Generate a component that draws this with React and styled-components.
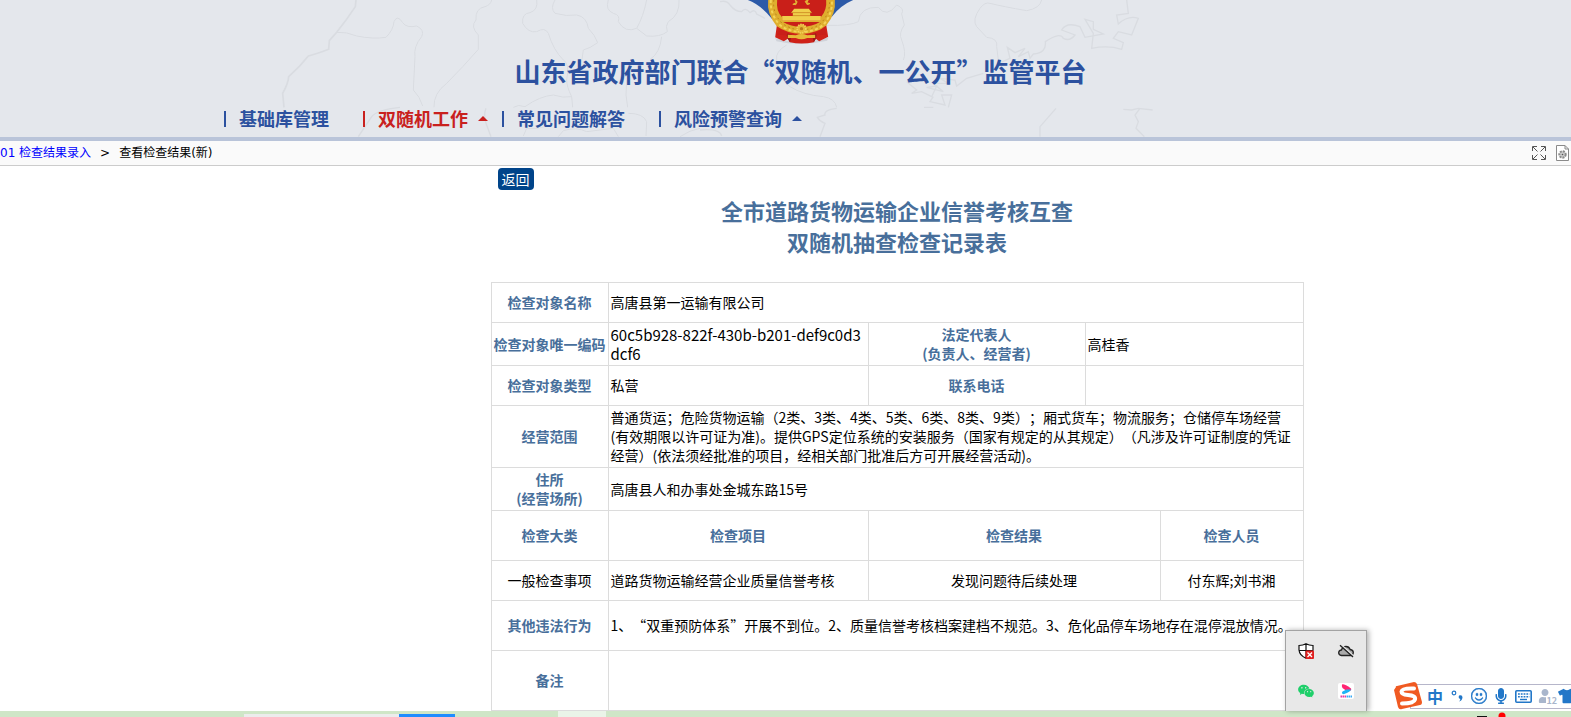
import React from "react";
import styled, { createGlobalStyle } from "styled-components";
import { FaMicrophone, FaTshirt, FaUser } from "react-icons/fa";
import { BsEmojiSmile } from "react-icons/bs";
import { AiFillWechat } from "react-icons/ai";

const GlobalStyle = createGlobalStyle`
  * {
    box-sizing: border-box;
  }
  body {
    margin: 0;
    background: #fff;
    color: #000;
    font-family: "Noto Sans CJK SC", sans-serif;
    font-size: 14px;
    line-height: 19px;
    text-spacing-trim: space-all;
    overflow-x: hidden;
  }
`;

const menus = [
  { name: "基础库管理" },
  { name: "双随机工作", active: true, more: true },
  { name: "常见问题解答" },
  { name: "风险预警查询", more: true },
];

const MapLines = () => (
  <MapSvg viewBox="0 0 1571 137" aria-hidden="true">
    <g transform="translate(200 0) scale(.33333)">
      <path strokeWidth="5" d="M468 0L466 20Q440 60 410 97L388 122L386 148Q350 162 325 168Q300 200 266 230Q265 250 248 280L252 322" />
      <path d="M410 97Q440 95 470 108Q520 118 558 112Q580 90 582 65Q592 42 608 68Q620 85 650 78Q675 90 665 110Q640 140 645 170L640 270Q660 290 668 318" />
      <path d="M875 0Q872 15 855 20Q825 25 828 60Q810 80 835 105L835 148Q790 200 740 250Q700 280 702 322" />
      <path d="M1010 0Q1015 30 990 38Q965 40 968 70Q985 100 1010 95Q1035 80 1045 100Q1060 150 1090 180Q1110 190 1100 240Q1100 260 1115 290L1118 322" />
      <path d="M1065 0Q1050 25 1065 40Q1100 50 1130 45Q1160 50 1165 85Q1185 105 1193 128Q1170 145 1150 150L1145 185" />
      <path d="M1225 0Q1215 30 1240 40Q1262 45 1255 65Q1275 100 1310 85Q1330 50 1340 0" />
      <path d="M1437 0Q1440 45 1405 65Q1395 78 1402 95Q1380 112 1340 108L1310 85M1385 110Q1380 160 1350 178M1280 240L1278 285L1283 322" />
      <path d="M940 322Q955 312 975 320Q1020 288 1060 285Q1090 295 1115 290" />
      <path strokeWidth="4" d="M475 410Q495 380 515 350Q530 330 600 322M858 325Q850 345 858 370L873 410" />
      <path d="M970 408L980 385Q1040 390 1060 360L1100 370M1075 410L1090 392Q1130 380 1160 395L1240 385L1255 410M1285 340Q1330 340 1340 365L1338 408M1440 410Q1470 390 1500 385" />
    </g>
    <g transform="translate(700 0) scale(.33333)">
      <path strokeWidth="4" d="M60 5Q80 0 90 15Q105 35 125 35Q135 20 150 38Q165 25 170 42L195 55" />
      <path d="M380 76Q450 78 475 65Q480 20 535 22Q560 55 590 15Q615 25 605 42L613 75Q595 100 605 120Q620 160 610 180" />
      <path d="M260 135Q225 155 230 180Q230 230 270 260Q310 285 370 290Q405 295 410 322" />
      <path d="M1025 0Q1020 25 980 32Q910 20 870 10Q855 5 840 25Q815 60 830 80L860 112Q895 115 890 140L895 180" />
      <path strokeWidth="4" d="M895 190L930 175L922 142L945 158L975 145L955 170L985 155L990 175L1000 162Q1040 160 1036 125Q1080 95 1090 115Q1110 125 1125 105L1085 90Q1100 65 1140 80L1155 112L1210 102L1180 88L1180 65L1155 58L1180 100L1175 145Q1225 135 1265 148L1270 128L1240 115L1255 95L1295 105L1315 55Q1285 45 1255 72L1250 45L1285 40L1280 0" />
      <path strokeWidth="4" d="M620 245L650 270L635 280L665 275L695 290L710 258L680 262L730 275L700 250L745 250L720 235L765 240L770 258L800 235L850 220M700 290L690 305L735 315L725 285L755 285L745 322M672 322L700 322M50 200L70 180" />
      <path strokeWidth="4" d="M410 325Q370 330 375 345L352 352Q360 365 375 370L360 410M1068 325L1020 380V410M1270 328L1295 330L1315 325L1358 330M1320 325L1305 345L1315 365L1308 385L1333 410M0 390Q60 385 65 408" />
    </g>
  </MapSvg>
);

const Emblem = () => (
  <EmblemSvg viewBox="140 0 320 138" aria-label="国徽">
    <path fill="#2c5aa8" d="M142 0Q180 14 214 56L394 50Q420 16 458 0Z" />
    <path fill="#d0d3da" d="M224 114Q300 138 384 112L380 122Q300 140 228 124Z" />
    <path fill="#cf2219" d="M230 70L224 112L250 124L262 116L268 127Q303 134 340 127L346 116L356 124L383 110L376 68Z" />
    <path fill="#9d1814" d="M256 98L262 116L268 127L274 104ZM350 98L346 116L340 127L334 104Z" />
    <path fill="#dfae2e" d="M203 0Q198 40 228 78Q258 100 303 102Q351 100 378 76Q407 40 403 0Z" />
    <path fill="none" stroke="#f3d458" strokeWidth="6" strokeDasharray="9 7" d="M211 0Q208 40 236 73Q262 95 303 96Q346 95 370 73Q397 40 394 0" />
    <path fill="none" stroke="#b98018" strokeWidth="3" strokeDasharray="5 9" d="M220 0Q215 38 244 69Q268 88 303 90Q340 88 362 69Q390 38 387 0" />
    <path fill="#c91f19" d="M230 0Q226 34 245 52L245 62H361V52Q380 30 377 0Z" />
    <path fill="#c91f19" d="M248 66H358Q336 80 303 81Q270 80 248 66Z" />
    <path fill="#c91f19" d="M236 86L262 98L260 106L230 104ZM372 86L346 98L348 106L378 104Z" />
    <path fill="#f0cf4b" d="M281 26H325L334 38H272ZM277 39H329V47H277ZM245 48H361V62H245Z" />
    <path fill="#e3b437" d="M284 0L287 8L277 13L286 14L290 5ZM323 0L319 8L328 11L320 14L314 4Z" stroke="#e3b437" strokeWidth="3" />
    <path fill="none" stroke="#c9951f" strokeWidth="2" d="M272 38H334M277 47H329" />
    <circle cx="303" cy="86" r="13" fill="#e6b73a" stroke="#f2d35a" strokeWidth="5" strokeDasharray="4 3" />
    <circle cx="303" cy="86" r="5" fill="#b87a1b" />
    <path fill="#e7b938" d="M262 104L286 106Q303 98 320 106L344 104V114L320 114Q303 122 286 114L262 114Z" />
  </EmblemSvg>
);

const ExpandIcon = () => (
  <svg width="14" height="14" viewBox="0 0 14 14" fill="none" stroke="#555">
    <path d="M.5 5V.5H5M9 .5h4.500V5M.5 9v4.500H5M9 13.500h4.500V9M1 1l4.500 4.500M13 1L8.500 5.500M1 13l4.500-4.500M13 13L8.500 8.500" />
  </svg>
);

const PageSetupIcon = () => (
  <svg width="13" height="16" viewBox="0 0 13 16" fill="none" stroke="#8a8a8a">
    <path fill="#fff" d="M.5.500H9l3.500 3.500v11.500H.5ZM9 .5V4h3.500" />
    <circle cx="6.500" cy="9.500" r="3.200" fill="#ccc" strokeWidth="2" strokeDasharray="2 1" />
    <circle cx="6.500" cy="9.500" r=".8" fill="#555" stroke="none" />
  </svg>
);

const ShieldIcon = () => (
  <svg width="16" height="16" viewBox="0 0 16 16">
    <path fill="#fff" stroke="#111" strokeWidth="1.200" d="M8 .8Q11 2.500 15 2.500V7Q14.500 12.500 8 15.200Q1.500 12.500 1 7V2.500Q5 2.500 8 .8ZM8 1v14M1 7.500h14" />
    <rect x="7.500" y="7.500" width="8.500" height="8.500" rx="1" fill="#e02020" />
    <path stroke="#fff" strokeWidth="1.300" d="M9.500 9.500l4.500 4.500M14 9.500L9.500 14" />
  </svg>
);

const CloudOffIcon = () => (
  <svg width="16" height="16" viewBox="0 0 16 16">
    <path fill="#aaa" stroke="#222" strokeWidth="1.300" d="M3.500 12.500Q.5 12 .7 9.500Q1 7.200 3.500 7Q4.500 3.500 8 3.500Q11 3.500 12.200 6.500Q15.300 7 15.300 9.500Q15.200 12.500 12.500 12.500Z" />
    <path stroke="#e8e8e8" strokeWidth="1.500" d="M3 1.500L15 12.500" />
    <path stroke="#222" strokeWidth="1.300" d="M2 2.300L15 14" />
  </svg>
);

const VideoIcon = () => (
  <svg width="16" height="16" viewBox="0 0 16 16">
    <rect width="16" height="16" rx="2" fill="#fff" />
    <path fill="#ff2472" d="M4 1.500Q6 .5 13 5.500Q14 6.500 12 8L8 7.500L4.500 5Q3.500 3 4 1.500Z" />
    <path fill="#1db4f5" d="M13 6.500Q13 8.500 5.500 11.300Q3 10.500 4.500 8.500L8.500 6.500Z" />
    <path fill="none" stroke="#e83ba0" strokeWidth="2" strokeDasharray="1.500 .5" d="M2.500 13.500H8" />
    <path fill="none" stroke="#35a9f5" strokeWidth="2" strokeDasharray="1.500 .5" d="M8.500 13.500H14" />
  </svg>
);

const KeyboardIcon = () => (
  <svg width="17" height="13" viewBox="0 0 17 13" fill="none" stroke="currentColor">
    <rect x=".8" y=".8" width="15.400" height="11.400" rx="1" strokeWidth="1.600" />
    <path strokeWidth="1.600" strokeDasharray="1.800 1" d="M3 4h11.500M3 6.700h11.500" />
    <path strokeWidth="1.400" d="M5 9.500h7" />
  </svg>
);

const SogouLogo = () => (
  <LogoSvg width="28" height="28" viewBox="0 0 28 28">
    <path fill="#f05a22" d="M2 5Q1 4 3 4L20 0Q22 0 23 2L28 20Q28 23 26 23L8 27Q5 28 4 25L0 8Z" />
    <path fill="none" stroke="#fff" strokeWidth="4" strokeLinecap="round" d="M20 6.500Q8 6 7.500 9.500Q7.500 12.500 14 13Q22 13.500 21 17.500Q20 21.500 8 21.500" />
  </LogoSvg>
);

const App = () => {
  return (
    <Page>
      <GlobalStyle />
      <Header>
        <MapLines />
        <Brand>
          <Emblem />
          <SiteName>山东省政府部门联合“双随机、一公开”监管平台</SiteName>
        </Brand>
        <Nav>
          {menus.map((item) => (
            <NavLink href="#" key={item.name} $active={item.active}>
              <span>{item.name}</span>
              {item.more && <Caret />}
            </NavLink>
          ))}
        </Nav>
      </Header>

      <Breadcrumb>
        <a href="#">01 检查结果录入</a>
        <span>&gt;</span>
        <span>查看检查结果(新)</span>
        <Tools>
          <IconButton aria-label="全屏"><ExpandIcon /></IconButton>
          <IconButton aria-label="页面设置"><PageSetupIcon /></IconButton>
        </Tools>
      </Breadcrumb>

      <Content>
        <Sheet>
          <BackButton>返回</BackButton>
          <SheetTitle>
            全市道路货物运输企业信誉考核互查
            <br />
            双随机抽查检查记录表
          </SheetTitle>
          <Table>
            <colgroup>
              <Col $w={117} />
              <Col $w={260} />
              <Col $w={217} />
              <Col $w={75} />
              <Col $w={143} />
            </colgroup>
            <tbody>
              <Row $h={40}>
                <th>检查对象名称</th>
                <td colSpan={4}>高唐县第一运输有限公司</td>
              </Row>
              <Row $h={43}>
                <th>检查对象唯一编码</th>
                <CodeCell>60c5b928-822f-430b-b201-def9c0d3dcf6</CodeCell>
                <th>法定代表人<br />(负责人、经营者)</th>
                <td colSpan={2}>高桂香</td>
              </Row>
              <Row $h={40}>
                <th>检查对象类型</th>
                <td>私营</td>
                <th>联系电话</th>
                <td colSpan={2}></td>
              </Row>
              <Row $h={62}>
                <th>经营范围</th>
                <td colSpan={4}>
                  普通货运；危险货物运输（2类、3类、4类、5类、6类、8类、9类）；厢式货车；物流服务；仓储停车场经营(有效期限以许可证为准)。提供GPS定位系统的安装服务（国家有规定的从其规定）（凡涉及许可证制度的凭证经营）(依法须经批准的项目，经相关部门批准后方可开展经营活动)。
                </td>
              </Row>
              <Row $h={43}>
                <th>住所<br />(经营场所)</th>
                <td colSpan={4}>高唐县人和办事处金城东路15号</td>
              </Row>
              <Row $h={50}>
                <th>检查大类</th>
                <th>检查项目</th>
                <th colSpan={2}>检查结果</th>
                <th>检查人员</th>
              </Row>
              <Row $h={40}>
                <Centered>一般检查事项</Centered>
                <td>道路货物运输经营企业质量信誉考核</td>
                <Centered colSpan={2}>发现问题待后续处理</Centered>
                <Centered>付东辉;刘书湘</Centered>
              </Row>
              <Row $h={50}>
                <th>其他违法行为</th>
                <td colSpan={4}>
                  1、“双重预防体系”开展不到位。2、质量信誉考核档案建档不规范。3、危化品停车场地存在混停混放情况。
                </td>
              </Row>
              <Row $h={60}>
                <th>备注</th>
                <td colSpan={4}></td>
              </Row>
            </tbody>
          </Table>
        </Sheet>
      </Content>

      <Tray>
        <ShieldIcon />
        <CloudOffIcon />
        <WechatBox>
          <AiFillWechat size={18} />
        </WechatBox>
        <VideoIcon />
      </Tray>

      <ImeBar>
        <SogouLogo />
        <ImeKeys>
          <b>中</b>
          <svg width="12" height="14" viewBox="0 0 12 14">
            <circle cx="3" cy="4" r="1.800" fill="none" stroke="currentColor" strokeWidth="1.200" />
            <path fill="currentColor" d="M8 6.500Q11.500 5.500 11.500 8.500Q11 12 8 12.500Q9.500 11 9.300 10Q7 9.500 8 6.500Z" />
          </svg>
          <BsEmojiSmile size={16} strokeWidth={.5} />
          <FaMicrophone size={16} />
          <KeyboardIcon />
          <UserLevel>
            <FaUser size={14} />
            <small>12</small>
          </UserLevel>
          <FaTshirt size={18} />
        </ImeKeys>
      </ImeBar>

      <Taskbar>
        <Task $w={155} $color="#ececec" />
        <Task $w={56} $color="#1e8cff" />
        <Task $w={48} $color="#eaf4e8" $gap={103} $full />
        <TaskMarks width="32" height="6" viewBox="0 0 32 6">
          <path fill="#111" d="M1 5h10v1H1z" />
          <circle cx="26" cy="5" r="3.500" fill="#f00" />
        </TaskMarks>
      </Taskbar>
    </Page>
  );
};

const Page = styled.div`
  position: relative;
  display: flex;
  flex-direction: column;
  min-height: 100vh;
  overflow: hidden;
`;

const Header = styled.header`
  position: relative;
  background: #e4e7ec;
  border-bottom: 4px solid #b9c4d9;
`;

const MapSvg = styled.svg`
  position: absolute;
  top: 0;
  left: 0;
  width: 1571px;
  height: 137px;
  fill: none;
  stroke: #d9dce1;
  stroke-width: 3;
`;

const Brand = styled.div`
  position: relative;
  display: flex;
  flex-direction: column;
  align-items: center;
  padding-left: 30px;
`;

const EmblemSvg = styled.svg`
  display: block;
  width: 107px;
  height: 46px;
`;

const SiteName = styled.h1`
  margin: 0;
  padding-bottom: 4px;
  color: #2c519f;
  font-size: 26px;
  line-height: 50px;
`;

const Nav = styled.nav`
  position: relative;
  display: flex;
  align-items: center;
  height: 37px;
  padding-left: 224px;
`;

const NavLink = styled.a`
  display: flex;
  align-items: center;
  height: 16px;
  padding: 0 0 0 13px;
  border-left: 2px solid;
  color: ${(p) => (p.$active ? "#c9211e" : "#2c519f")};
  font-size: 18px;
  font-weight: bold;
  text-decoration: none;
  > span {
    margin-right: 34px;
  }
`;

const Caret = styled.i`
  margin: 0 14px 0 -24px;
  border: solid transparent;
  border-width: 0 5px 5px;
  border-bottom-color: currentColor;
`;

const Breadcrumb = styled.div`
  display: flex;
  align-items: center;
  gap: 9px;
  height: 25px;
  padding-right: 2px;
  background: #fafafa;
  border-bottom: 1px solid #ccc;
  font-family: "DejaVu Sans", "Noto Sans CJK SC", sans-serif;
  font-size: 12px;
  a {
    color: #00f;
    text-decoration: none;
  }
`;

const Tools = styled.div`
  display: flex;
  align-items: center;
  gap: 10px;
  margin-left: auto;
`;

const IconButton = styled.button`
  display: flex;
  padding: 0;
  border: 0;
  background: none;
`;

const Content = styled.main`
  flex: 1;
  display: flex;
  justify-content: center;
  padding: 2px 0 0 223px;
`;

const Sheet = styled.div`
  width: 813px;
`;

const BackButton = styled.button`
  display: block;
  height: 22px;
  margin-left: 7px;
  padding: 0 4px;
  border: 0;
  border-radius: 4px;
  background: #00448a;
  color: #fff;
  font: inherit;
`;

const SheetTitle = styled.h2`
  margin: 5px 0 25px;
  color: #486f9b;
  font-size: 22px;
  line-height: 31px;
  text-align: center;
`;

const Table = styled.table`
  width: 100%;
  table-layout: fixed;
  border-collapse: collapse;
  th,
  td {
    padding: 2px;
    border: 1px solid #dcdcdc;
  }
  td[colspan="4"] {
    padding-right: 6px;
  }
  th {
    padding: 2px 0;
    color: #486f9b;
  }
`;

const Col = styled.col`
  width: ${(p) => p.$w}px;
`;

const Row = styled.tr`
  height: ${(p) => p.$h}px;
`;

const Centered = styled.td`
  text-align: center;
`;

const CodeCell = styled.td`
  font-size: 15px;
  word-break: break-all;
`;

const Tray = styled.div`
  position: absolute;
  right: 204px;
  bottom: 6px;
  display: grid;
  grid-template-columns: 40px 40px;
  grid-auto-rows: 40px;
  place-items: center;
  border: 1px solid #a3a3a3;
  border-bottom: 0;
  background: #e8e8e8;
  box-shadow: 2px 0 5px rgba(0, 0, 0, 0.3);
`;

const WechatBox = styled.span`
  display: flex;
  color: #1fcf6a;
`;

const ImeBar = styled.div`
  position: absolute;
  right: 0;
  bottom: 7px;
  display: flex;
  align-items: center;
  width: 177px;
  height: 28px;
`;

const LogoSvg = styled.svg`
  position: relative;
  z-index: 1;
  flex: none;
`;

const ImeKeys = styled.div`
  display: grid;
  grid-template-columns: repeat(7, 22px);
  place-items: center;
  flex: 1;
  height: 25px;
  margin-left: -12px;
  padding-left: 13px;
  border: 1px solid #b6b6ca;
  border-right: 0;
  background: #fff;
  color: #2277c8;
  overflow: hidden;
  b {
    font-size: 16px;
  }
`;

const UserLevel = styled.span`
  position: relative;
  display: flex;
  color: #a9b6cc;
  small {
    position: absolute;
    right: -5px;
    bottom: -2px;
    background: #fff;
    font-size: 9px;
    font-weight: bold;
    line-height: 8px;
  }
`;

const Taskbar = styled.footer`
  display: flex;
  align-items: flex-end;
  height: 6px;
  padding-left: 244px;
  background: #cfe6c7;
`;

const Task = styled.span`
  width: ${(p) => p.$w}px;
  height: ${(p) => (p.$full ? 6 : 3)}px;
  margin-left: ${(p) => p.$gap || 0}px;
  background: ${(p) => p.$color};
`;

const TaskMarks = styled.svg`
  margin: 0 63px 0 auto;
`;

export default App;
